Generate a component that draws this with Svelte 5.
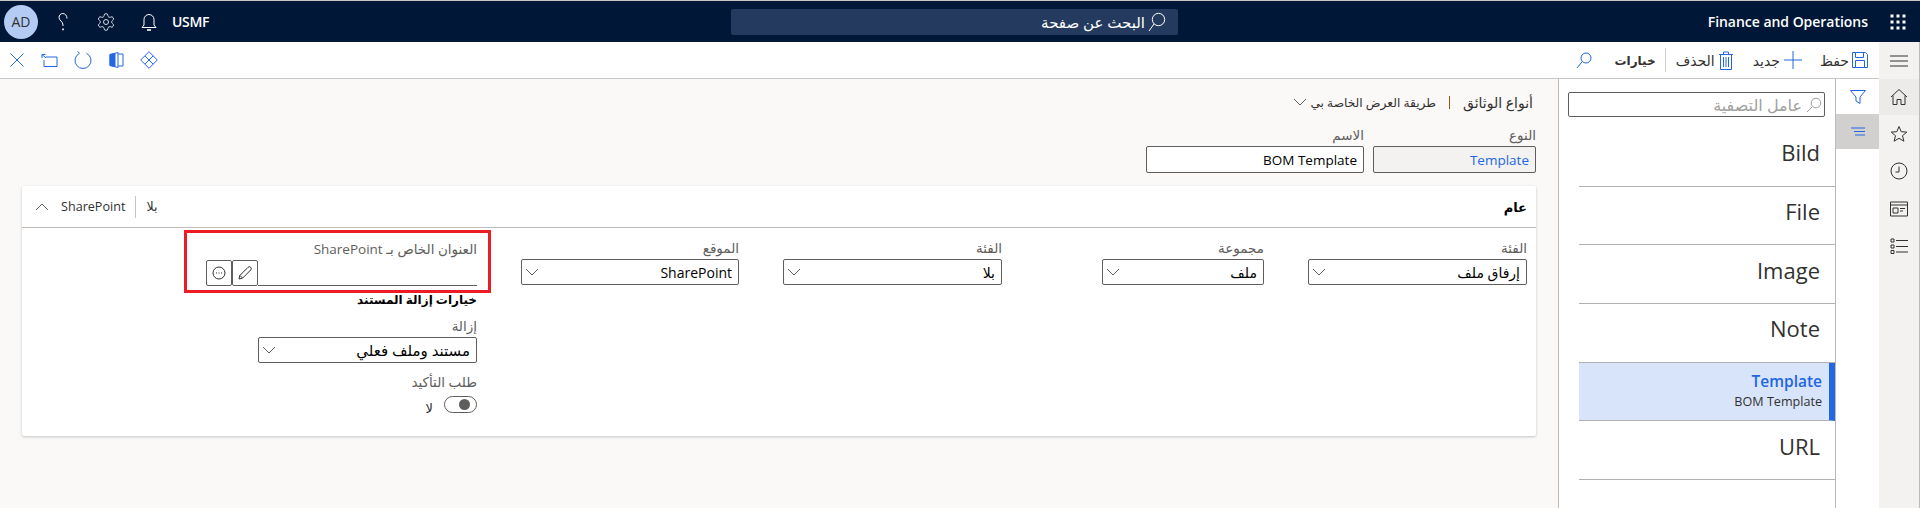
<script>
  const listItems = [
    { title: 'Bild' },
    { title: 'File' },
    { title: 'Image' },
    { title: 'Note' },
    { title: 'Template', sub: 'BOM Template', selected: true },
    { title: 'URL' }
  ];

  const fields = [
    { label: 'الفئة', value: 'إرفاق ملف', width: 219, after: 44 },
    { label: 'مجموعة', value: 'ملف', width: 162, after: 100 },
    { label: 'الفئة', value: 'بلا', width: 219, after: 44 },
    { label: 'الموقع', value: 'SharePoint', width: 218, after: 44 }
  ];
</script>

{#snippet chevron()}
  <svg class="chev" width="14" height="8" viewBox="0 0 14 8"><path d="M1 1l6 6 6-6" /></svg>
{/snippet}

<div class="app" dir="rtl">
  <header class="topbar">
    <div class="brand">
      <svg class="apps" width="16" height="16" viewBox="0 0 16 16">
        {#each [2, 8, 14] as y}
          {#each [2, 8, 14] as x}
            <rect x={x - 1.5} y={y - 1.5} width="3" height="3" />
          {/each}
        {/each}
      </svg>
      <span class="product" dir="ltr">Finance and Operations</span>
    </div>
    <div class="search">
      <svg width="18" height="20" viewBox="0 0 18 20"><circle cx="10.5" cy="7.5" r="6.2" /><path d="M6 12L1 19" /></svg>
      <span>البحث عن صفحة</span>
    </div>
    <div class="session">
      <span class="company">USMF</span>
      <svg class="bell" width="18" height="20" viewBox="0 0 18 20"><path d="M2 15.500h14l-2-2.500V7.500a5 5 0 0 0-10 0V13z" /><path d="M7 18h4" stroke-width="1.6" /></svg>
      <svg class="gear" width="20" height="20" viewBox="0 0 24 24"><path d="M12.22 2h-.44a2 2 0 0 0-2 2v.18a2 2 0 0 1-1 1.73l-.43.25a2 2 0 0 1-2 0l-.15-.08a2 2 0 0 0-2.73.73l-.22.38a2 2 0 0 0 .73 2.73l.15.1a2 2 0 0 1 1 1.72v.51a2 2 0 0 1-1 1.74l-.15.09a2 2 0 0 0-.73 2.73l.22.38a2 2 0 0 0 2.73.73l.15-.08a2 2 0 0 1 2 0l.43.25a2 2 0 0 1 1 1.73V20a2 2 0 0 0 2 2h.44a2 2 0 0 0 2-2v-.18a2 2 0 0 1 1-1.73l.43-.25a2 2 0 0 1 2 0l.15.08a2 2 0 0 0 2.73-.73l.22-.39a2 2 0 0 0-.73-2.73l-.15-.08a2 2 0 0 1-1-1.74v-.5a2 2 0 0 1 1-1.74l.15-.09a2 2 0 0 0 .73-2.73l-.22-.38a2 2 0 0 0-2.73-.73l-.15.08a2 2 0 0 1-2 0l-.43-.25a2 2 0 0 1-1-1.73V4a2 2 0 0 0-2-2z" /><circle cx="12" cy="12" r="3" /></svg>
      <svg class="help" width="12" height="20" viewBox="0 0 12 20"><path d="M10 6.500C10 3.500 8 1.500 5.800 1.500 3.600 1.500 2 3.300 2 5.500c0 3 4 4 4 7.500v1" /><path d="M6 16.600v1.600" stroke-width="1.6" /></svg>
      <span class="avatar">AD</span>
    </div>
  </header>

  <div class="shell">
    <nav class="rail">
      <div class="rail-btn top">
        <svg width="18" height="12" viewBox="0 0 18 12"><path d="M0 1h18M0 6h18M0 11h18" /></svg>
      </div>
      <div class="rail-btn home">
        <svg width="18" height="18" viewBox="0 0 18 18"><path d="M1 9l8-7.500L17 9M3 7.500V16.500h4v-5h4v5h4V7.500" /></svg>
      </div>
      <div class="rail-btn">
        <svg width="18" height="18" viewBox="0 0 18 18"><path d="M9 1.500l2.200 5.200 5.600.4-4.300 3.600 1.400 5.500L9 13.300l-4.900 2.900 1.400-5.500L1.200 7.100l5.600-.4z" /></svg>
      </div>
      <div class="rail-btn">
        <svg width="18" height="18" viewBox="0 0 18 18"><circle cx="9" cy="9" r="8" /><path d="M9 4.500V10H5.500" /></svg>
      </div>
      <div class="rail-btn">
        <svg width="18" height="16" viewBox="0 0 18 16"><path d="M.5 1h17v14H.5zM.5 4h17" /><path d="M3 7h5v5H3z" /><path d="M10 7.500h5M10 10h3" /></svg>
      </div>
      <div class="rail-btn">
        <svg width="18" height="18" viewBox="0 0 18 18"><path d="M1 2h3v3H1zM1 8h3v3H1zM1 13.500h3v3H1zM6 3.500h12M6 9.500h12M6 15h12" /></svg>
      </div>
    </nav>

    <div class="workspace">
      <div class="toolbar">
        <div class="actions">
          <button type="button" class="action save">
            <svg class="blue" width="16" height="16" viewBox="0 0 16 16"><path d="M.5.500h13l2 2v13H.500zM3.500.500v5h8v-5M3.500 15.500v-7h9v7" /></svg>
            <span>حفظ</span>
          </button>
          <button type="button" class="action add">
            <svg class="blue" width="18" height="18" viewBox="0 0 18 18"><path d="M9 0v18M0 9h18" /></svg>
            <span>جديد</span>
          </button>
          <button type="button" class="action trash">
            <svg class="blue" width="14" height="19" viewBox="0 0 14 19"><path d="M0 3.500h14M4.500 3.500V1h5v2.500M1.500 3.500v15h11v-15M4.500 6v10M7 6v10M9.500 6v10" /></svg>
            <span>الحذف</span>
          </button>
          <i class="divider"></i>
          <button type="button" class="action options">خيارات</button>
          <svg class="blue lens" width="16" height="17" viewBox="0 0 16 17"><circle cx="10" cy="6" r="5" /><path d="M6.300 9.500L1 16" /></svg>
        </div>
        <div class="tools">
          <svg class="blue" width="14" height="14" viewBox="0 0 14 14"><path d="M.5.500l13 13M13.500.500l-13 13" /></svg>
          <svg class="blue" width="17" height="13" viewBox="0 0 17 13"><path d="M5 3h11v9.500H3V6M1 .5l4 3.500M1 .5h3.500M1 .5v3.500" /></svg>
          <svg class="blue" width="18" height="18" viewBox="0 0 18 18"><path d="M5.500 2.300a8 8 0 1 0 7 0M5.500 2.300L3.500 .3" /></svg>
          <svg class="office" width="15" height="16" viewBox="0 0 15 16"><path d="M9 .5L1 2.500v11l8 2zM9 2h5v12H9" /><path d="M1 2.500l5 -1v13l-5 -1z" class="fill" /></svg>
          <svg class="blue" width="18" height="18" viewBox="0 0 18 18"><path d="M9 .7L17.300 9 9 17.300 .7 9zM5 5l8 8M13 5l-8 8" /></svg>
        </div>
      </div>

      <div class="body">
        <div class="tabs">
          <div class="tab">
            <svg class="blue" width="16" height="14" viewBox="0 0 16 14"><path d="M.5.500h15L10 7v6.500L6 11V7z" /></svg>
          </div>
          <div class="tab active">
            <svg class="blue" width="14" height="9" viewBox="0 0 14 9"><path d="M0 1h14M3 4.500h11M4 8h10" /></svg>
          </div>
        </div>

        <aside class="list">
          <div class="filter">
            <svg width="16" height="16" viewBox="0 0 16 16"><circle cx="10" cy="6" r="4.800" /><path d="M6.500 9.500L1 15" /></svg>
            <span>عامل التصفية</span>
          </div>
          {#each listItems as item}
            <div class="row" class:selected={item.selected}>
              <span class="row-title">{item.title}</span>
              {#if item.sub}<span class="row-sub">{item.sub}</span>{/if}
            </div>
          {/each}
        </aside>

        <main class="content">
          <div class="title">
            <span class="crumb">أنواع الوثائق</span>
            <i class="pipe"></i>
            <span class="view">طريقة العرض الخاصة بي</span>
            {@render chevron()}
          </div>

          <div class="head-fields">
            <label class="field type">
              <span class="label">النوع</span>
              <span class="box link">Template</span>
            </label>
            <label class="field name">
              <span class="label">الاسم</span>
              <span class="box">BOM Template</span>
            </label>
          </div>

          <section class="card">
            <div class="card-head">
              <span class="card-title">عام</span>
              <div class="summary">
                <span>بلا</span>
                <i class="sep"></i>
                <span>SharePoint</span>
                <svg class="chev up" width="14" height="8" viewBox="0 0 14 8"><path d="M1 7l6-6 6 6" /></svg>
              </div>
            </div>
            <div class="card-body">
              {#each fields as f}
                <div class="field" style="width:{f.width}px;margin-left:{f.after}px">
                  <span class="label">{f.label}</span>
                  <div class="box select">
                    <span>{f.value}</span>
                    {@render chevron()}
                  </div>
                </div>
              {/each}

              <div class="last">
                <div class="callout">
                  <div class="field">
                    <span class="label">العنوان الخاص بـ SharePoint</span>
                    <div class="url">
                      <div class="underline"></div>
                      <button type="button" class="sq" aria-label="edit">
                        <svg width="14" height="14" viewBox="0 0 14 14"><path d="M1 13l.8-3.500L10 1.300a1.500 1.500 0 0 1 2.700 2.700L4.500 12.200zM2 9.500L4.500 12" /></svg>
                      </button>
                      <button type="button" class="sq" aria-label="more">
                        <svg width="14" height="14" viewBox="0 0 14 14"><circle cx="7" cy="7" r="6" /><path d="M4 7h1M6.500 7h1M9 7h1" /></svg>
                      </button>
                    </div>
                  </div>
                </div>
                <h4 class="group">خيارات إزالة المستند</h4>
                <div class="field remove">
                  <span class="label">إزالة</span>
                  <div class="box select">
                    <span>مستند وملف فعلي</span>
                    {@render chevron()}
                  </div>
                </div>
                <div class="field confirm">
                  <span class="label">طلب التأكيد</span>
                  <div class="toggle-row">
                    <span class="toggle"><i></i></span>
                    <span class="toggle-text">لا</span>
                  </div>
                </div>
              </div>
            </div>
          </section>
        </main>
      </div>
    </div>
  </div>
</div>

<style>
  :global(body) {
    margin: 0;
  }

  .app {
    width: 1920px;
    height: 508px;
    display: flex;
    flex-direction: column;
    overflow: hidden;
    border-top: 1px solid #c8c6c4;
    box-sizing: border-box;
    font-family: "Open Sans", "DejaVu Sans", sans-serif;
    font-size: 12px;
    color: #323130;
  }

  svg {
    fill: none;
    stroke: currentColor;
    stroke-width: 1;
    flex: none;
    display: block;
  }

  i {
    display: block;
  }

  .topbar {
    height: 41px;
    flex: none;
    display: grid;
    grid-template-columns: 742px 447px 1fr;
    align-items: center;
    background: #001738;
    color: #fff;
  }

  .brand {
    display: flex;
    align-items: center;
    gap: 22px;
    padding-right: 14px;
  }

  .apps {
    fill: #fff;
    stroke: none;
  }

  .product {
    font-size: 14px;
    font-weight: 600;
    letter-spacing: -0.03px;
  }

  .search {
    height: 26px;
    display: flex;
    align-items: center;
    gap: 3px;
    padding-right: 12px;
    border-radius: 2px;
    background: #243a5e;
    font-size: 15px;
  }

  .session {
    display: flex;
    align-items: center;
    justify-content: flex-end;
    padding-left: 4px;
  }

  .avatar {
    width: 34px;
    height: 34px;
    border-radius: 50%;
    background: #b4ccf4;
    color: #323130;
    font-size: 14px;
    display: grid;
    place-items: center;
  }

  .help {
    margin-left: 19px;
  }

  .gear {
    margin-left: 27px;
  }

  .bell {
    margin-left: 24px;
  }

  .company {
    margin-left: 14px;
    font-size: 14px;
    font-weight: 600;
    letter-spacing: -0.3px;
  }

  .shell {
    flex: 1;
    min-height: 0;
    display: flex;
  }

  .rail {
    width: 40px;
    flex: none;
    background: #f3f2f1;
    border-right: 1px solid #bebbb8;
    display: flex;
    flex-direction: column;
    color: #323130;
  }

  .rail-btn {
    height: 37.500px;
    flex: none;
    display: grid;
    place-items: center;
  }

  .rail-btn.top {
    height: 37px;
  }

  .rail-btn.home {
    height: 36px;
    background: #edebe9;
  }

  .workspace {
    flex: 1;
    min-width: 0;
    display: flex;
    flex-direction: column;
  }

  .toolbar {
    height: 37px;
    box-sizing: border-box;
    flex: none;
    display: flex;
    justify-content: space-between;
    align-items: center;
    background: #fff;
    border-bottom: 1px solid #c8c6c4;
  }

  .actions {
    display: flex;
    align-items: center;
    padding-right: 11px;
  }

  .action {
    display: flex;
    align-items: center;
    gap: 4px;
    padding: 0;
    border: 0;
    background: none;
    color: #323130;
    font: inherit;
    font-size: 14px;
  }

  .save {
    gap: 3px;
    margin-left: 18px;
  }

  .add {
    margin-left: 20px;
  }

  .trash {
    margin-left: 10px;
  }

  .blue {
    color: #2266e3;
  }

  .divider {
    width: 1px;
    height: 24px;
    background: #d2d0ce;
    margin-left: 9px;
  }

  .options {
    font-weight: 700;
    font-size: 12px;
    margin-left: 23px;
  }

  .tools {
    display: flex;
    align-items: center;
    gap: 16.500px;
    padding-left: 10px;
    flex-direction: row-reverse;
  }

  .office {
    color: #2266e3;
  }

  .office .fill {
    fill: #2266e3;
  }

  .body {
    flex: 1;
    min-height: 0;
    display: flex;
  }

  .tabs {
    width: 43px;
    flex: none;
    background: #fff;
  }

  .tab {
    height: 35px;
    display: grid;
    place-items: center;
  }

  .tab.active {
    background: #d2d0ce;
  }

  .list {
    width: 276px;
    flex: none;
    background: #fff;
    border-right: 1px solid #bebbb8;
    border-left: 1px solid #bebbb8;
    padding-top: 13px;
  }

  .filter {
    height: 25px;
    margin: 0 10px 11px 9px;
    display: flex;
    align-items: center;
    gap: 4px;
    padding-right: 2px;
    border: 1px solid #605e5c;
    border-radius: 2px;
    box-sizing: border-box;
    color: #a19f9d;
    font-size: 16px;
  }

  .row {
    height: 58.700px;
    width: 256px;
    box-sizing: border-box;
    border-bottom: 1px solid #b3b0ad;
    padding: 0 15px 9px 0;
    display: flex;
    flex-direction: column;
    justify-content: center;
  }

  .row-title {
    font-size: 22px;
    line-height: 30px;
    color: #323130;
  }

  .row.selected {
    background: #d8e4fa;
    border-right: 6px solid #2266e3;
    padding: 0 7px 0 0;
  }

  .row.selected .row-title {
    font-size: 15.500px;
    font-weight: 600;
    color: #2266e3;
    line-height: 21px;
  }

  .row-sub {
    font-size: 12.600px;
    line-height: 20px;
  }

  .content {
    flex: 1;
    min-width: 0;
    background: #faf9f8;
    padding: 0 22px;
  }

  .title {
    height: 24px;
    margin-top: 11px;
    display: flex;
    align-items: center;
    padding-right: 3px;
  }

  .crumb {
    font-size: 14px;
  }

  .pipe {
    width: 1px;
    height: 13px;
    background: #8a5a14;
    margin: 0 13px;
  }

  .view {
    font-size: 12.200px;
    margin-left: 3px;
  }

  .chev {
    color: #605e5c;
  }

  .head-fields {
    display: flex;
    gap: 9px;
    margin-top: 13px;
  }

  .field {
    display: flex;
    flex-direction: column;
  }

  .label {
    height: 16px;
    line-height: 16px;
    margin-bottom: 3px;
    font-size: 13.500px;
    color: #605e5c;
  }

  .box {
    height: 27px;
    box-sizing: border-box;
    border: 1px solid #605e5c;
    border-radius: 2px;
    background: #fff;
    display: flex;
    align-items: center;
    padding: 0 6px;
    font-size: 13.500px;
    color: #000;
  }

  .type {
    width: 163px;
  }

  .name {
    width: 218px;
  }

  .type .box {
    background: #f3f2f1;
    color: #2266e3;
  }

  .card {
    margin-top: 13px;
    height: 250px;
    box-sizing: border-box;
    background: #fff;
    box-shadow: 0 1px 3px rgba(0, 0, 0, 0.22);
    border-radius: 2px;
  }

  .card-head {
    height: 41px;
    box-sizing: content-box;
    display: flex;
    align-items: center;
    justify-content: space-between;
    padding: 0 9px 0 13px;
    border-bottom: 1px solid #bebbb8;
  }

  .card-title {
    font-size: 13px;
    font-weight: 600;
    color: #000;
  }

  .summary {
    display: flex;
    align-items: center;
    gap: 10px;
    font-size: 12.600px;
  }

  .summary .up {
    margin-right: 2px;
  }

  .sep {
    width: 1px;
    height: 22px;
    background: #c8c6c4;
  }

  .card-body {
    display: flex;
    padding: 12px 9px 0 0;
  }

  .select {
    justify-content: space-between;
    height: 26px;
    padding-left: 3px;
    font-size: 14px;
  }

  .last {
    width: 219px;
    display: flex;
    flex-direction: column;
  }

  .callout {
    margin: -10px -14px 0 -74px;
    padding: 8px 11px 0 19px;
    border: 3px solid #ec1c24;
    height: 63px;
    box-sizing: border-box;
  }

  .url {
    display: flex;
    height: 26px;
  }

  .underline {
    flex: 1;
    border-bottom: 1px solid #605e5c;
  }

  .sq {
    width: 26px;
    height: 26px;
    padding: 0;
    margin: 0;
    display: grid;
    place-items: center;
    background: #fff;
    border: 1px solid #605e5c;
    border-radius: 2px;
    color: #323130;
  }

  .group {
    margin: 0;
    font-size: 12px;
    font-weight: 700;
    line-height: 14px;
    color: #000;
  }

  .remove {
    margin-top: 11px;
  }

  .remove .select {
    font-size: 15px;
  }

  .confirm {
    margin-top: 11px;
  }

  .toggle-row {
    margin-top: 3px;
    display: flex;
    align-items: flex-start;
    gap: 11px;
  }

  .toggle {
    width: 33px;
    height: 17px;
    box-sizing: border-box;
    border: 1px solid #605e5c;
    border-radius: 9px;
    background: #fff;
    display: flex;
    align-items: center;
    padding-right: 6px;
  }

  .toggle i {
    width: 11px;
    height: 11px;
    border-radius: 50%;
    background: #605e5c;
  }

  .toggle-text {
    font-size: 13px;
    line-height: 16px;
    padding-top: 4px;
  }
</style>
